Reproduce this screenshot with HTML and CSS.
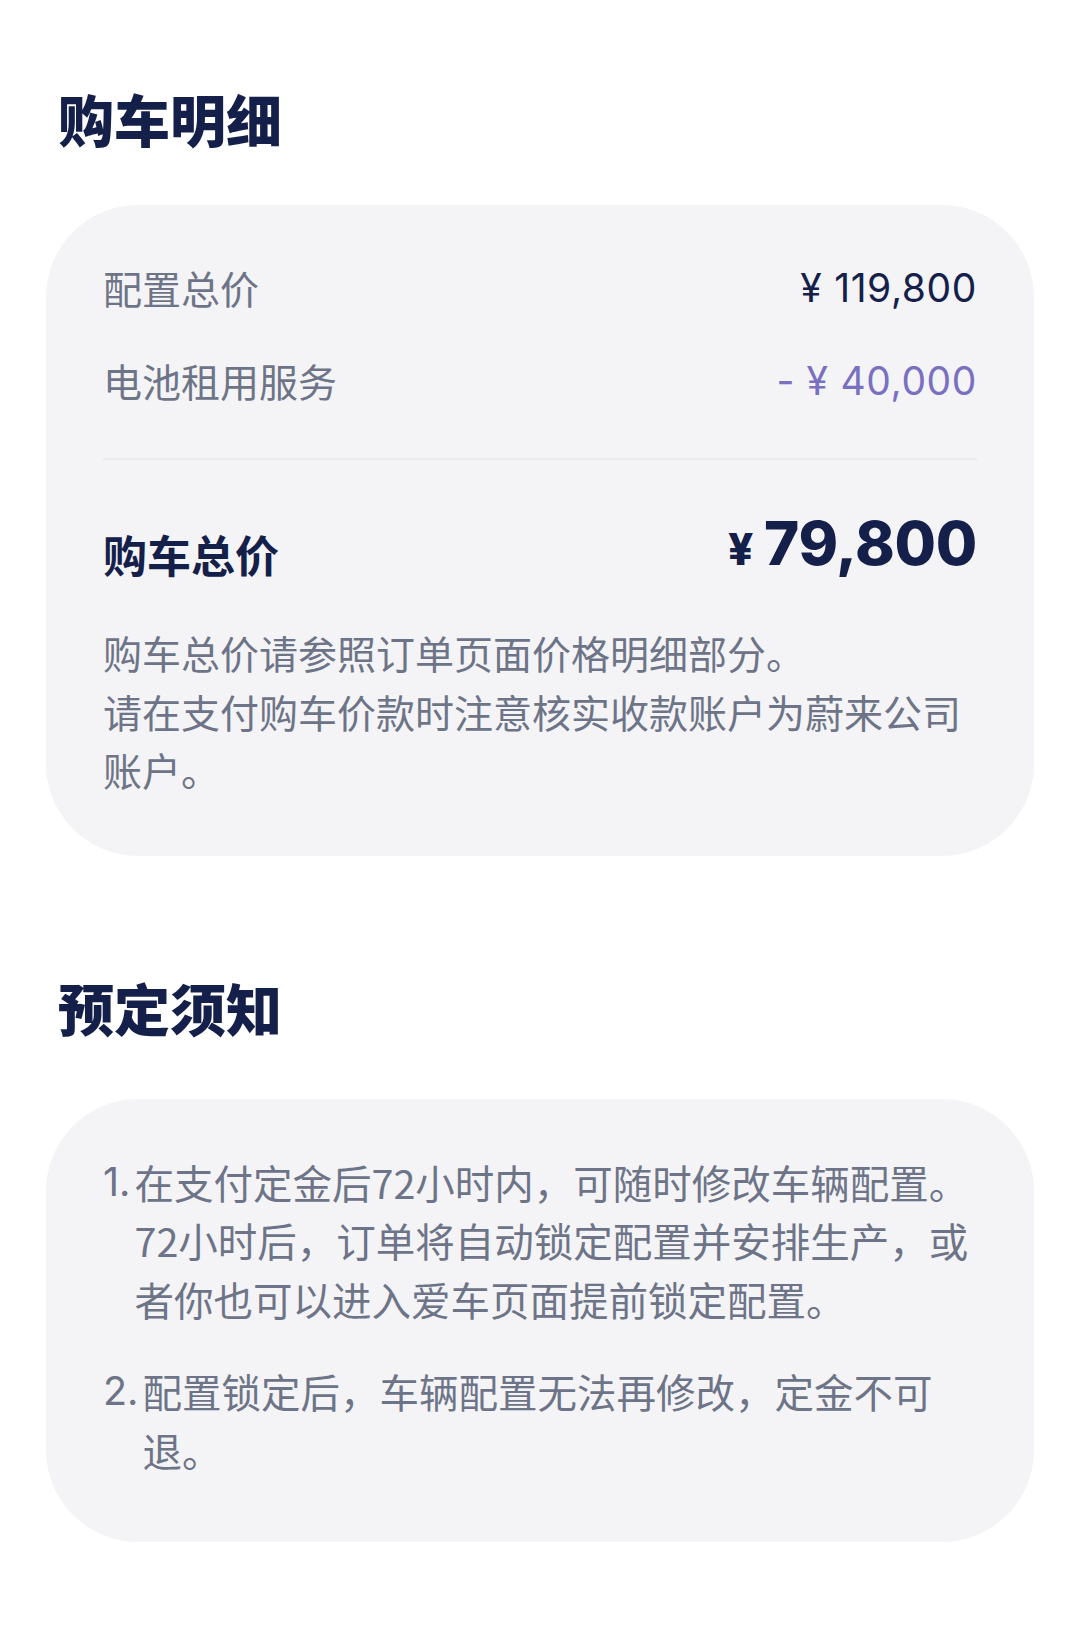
FILE: index.html
```html
<!DOCTYPE html>
<html lang="zh-CN">
<head>
<meta charset="utf-8">
<title>购车明细</title>
<link rel="stylesheet" href="styles.css">
</head>
<body>
<main class="page">
  <h1 class="section-title">购车明细</h1>
  <section class="card price-card">
    <div class="row">
      <span class="label">配置总价</span>
      <span class="amount"><span class="cur">¥</span>119,800</span>
    </div>
    <div class="row">
      <span class="label">电池租用服务</span>
      <span class="amount discount">- <span class="cur">¥</span>40,000</span>
    </div>
    <div class="divider"></div>
    <div class="total-row">
      <span class="total-label">购车总价</span>
      <span class="total-amount"><span class="yen">¥</span>79,800</span>
    </div>
    <p class="note">购车总价请参照订单页面价格明细部分。<br>请在支付购车价款时注意核实收款账户为蔚来公司账户。</p>
  </section>

  <h1 class="section-title second">预定须知</h1>
  <section class="card notice-card">
    <ol class="notice-list">
      <li class="notice-item"><span class="num">1.</span><span class="text">在支付定金后72小时内，可随时修改车辆配置。72小时后，订单将自动锁定配置并安排生产，或者你也可以进入爱车页面提前锁定配置。</span></li>
      <li class="notice-item"><span class="num">2.</span><span class="text">配置锁定后，车辆配置无法再修改，定金不可退。</span></li>
    </ol>
  </section>
</main>
</body>
</html>
```
FILE: styles.css
```css
html, body {
  margin: 0;
  padding: 0;
  background: #ffffff;
}
body {
  font-family: "Noto Sans CJK SC", "Noto Sans", sans-serif;
  color: #15204a;
  -webkit-font-smoothing: antialiased;
}
.page {
  padding: 79px 46px 94px 46px;
}
.section-title {
  margin: 0 0 0 12px;
  font-size: 56px;
  line-height: 78px;
  font-weight: 900;
  color: #15204a;
}
.section-title.second {
  margin-top: 112px;
}
.card {
  background: #f4f4f7;
  border-radius: 92px;
  margin-top: 48px;
  padding: 52px 57px 57px 57px;
}
.row {
  display: flex;
  justify-content: space-between;
  align-items: center;
  height: 60px;
}
.row + .row {
  margin-top: 33px;
}
.label {
  font-size: 39px;
  color: #6e7487;
}
.amount {
  font-family: "Inter", "Noto Sans", sans-serif;
  font-size: 39px;
  color: #15204a;
  letter-spacing: 0.6px;
}
.cur {
  margin-right: 12px;
}
.amount.discount {
  color: #7a70c0;
}
.divider {
  height: 2px;
  background: #e9e9ee;
  margin-top: 48px;
}
.total-row {
  display: flex;
  justify-content: space-between;
  align-items: flex-start;
  margin-top: 43px;
}
.total-label {
  font-size: 44px;
  line-height: 60px;
  padding-top: 21px;
  font-weight: 700;
  color: #15204a;
}
.total-amount {
  font-family: "Inter", "Noto Sans", sans-serif;
  font-size: 60px;
  font-weight: 800;
  color: #15204a;
  letter-spacing: -0.3px;
  line-height: 80px;
}
.yen {
  font-size: 44px;
  margin-right: 11px;
  font-weight: 800;
}
.note {
  margin: 34px 0 0 0;
  font-size: 39px;
  line-height: 58.5px;
  color: #6e7487;
}
.notice-card {
  margin-top: 53px;
  padding: 54px 57px 63px 57px;
}
.notice-list {
  list-style: none;
  margin: 0;
  padding: 0;
}
.notice-item {
  display: flex;
  font-size: 39.5px;
  line-height: 58.5px;
  color: #6e7487;
}
.notice-item + .notice-item {
  margin-top: 34px;
}
.num {
  font-family: "Inter", "Noto Sans", sans-serif;
  flex: none;
  margin-right: 4px;
}
.text {
  flex: 1;
}
```
